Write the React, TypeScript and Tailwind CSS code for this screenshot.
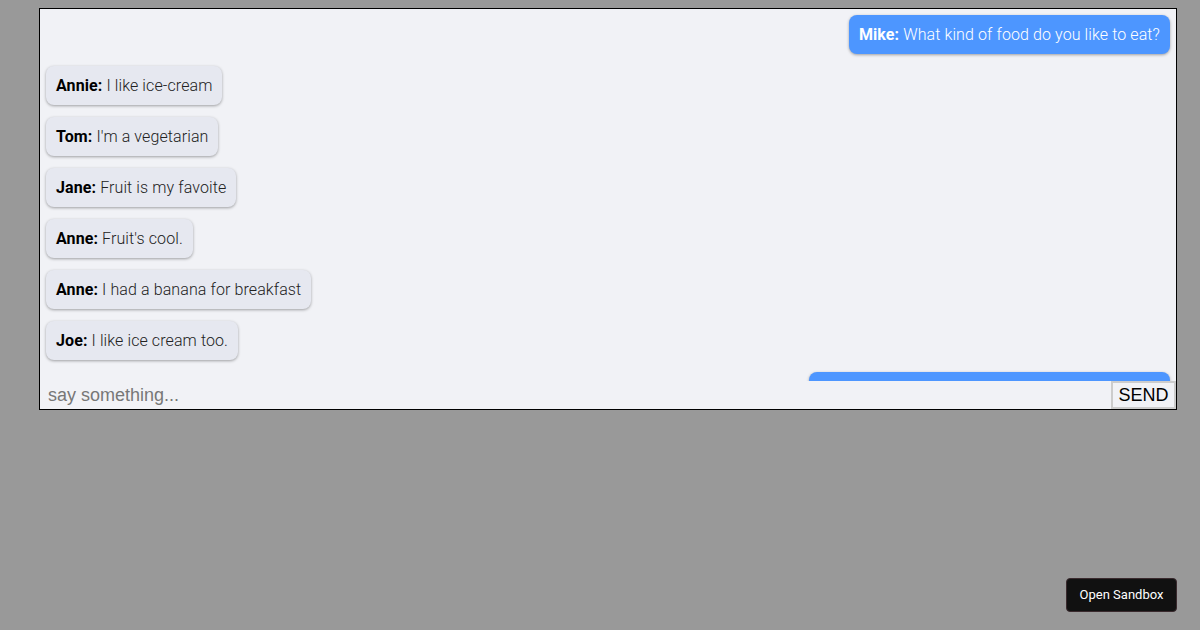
import React, { useState } from 'react';

type Message = {
  name: string;
  text: string;
  mine?: boolean;
};

const messages: Message[] = [
  { name: 'Mike', text: 'What kind of food do you like to eat?', mine: true },
  { name: 'Annie', text: 'I like ice-cream' },
  { name: 'Tom', text: "I'm a vegetarian" },
  { name: 'Jane', text: 'Fruit is my favoite' },
  { name: 'Anne', text: "Fruit's cool." },
  { name: 'Anne', text: 'I had a banana for breakfast' },
  { name: 'Joe', text: 'I like ice cream too.' },
  { name: 'Mike', text: 'Sounds good, I like ice cream and fruit too', mine: true },
];

const Bubble = ({ msg }: { msg: Message }) => (
  <div className={msg.mine ? 'flex justify-end' : 'flex justify-start'}>
    <div
      className={
        msg.mine
          ? 'rounded-[8px] bg-[#4d96ff] px-[10px] py-[10px] text-[16px] leading-[19px] font-light tracking-[0.1px] text-white shadow-[0_1px_3px_rgba(0,0,0,0.35)]'
          : 'rounded-[8px] bg-[#e6e8f0] px-[10px] py-[10px] text-[16px] leading-[19px] font-light tracking-[0.1px] text-[#222] shadow-[0_1px_3px_rgba(0,0,0,0.35)]'
      }
    >
      <span className={msg.mine ? 'font-bold text-white' : 'font-bold text-black'}>{msg.name}:</span>{' '}
      {msg.text}
    </div>
  </div>
);

export default function App() {
  const [draft, setDraft] = useState('');

  return (
    <div className="relative h-[630px] w-full overflow-hidden bg-[#999999] pt-2 font-['Roboto',sans-serif]">
      <div className="ml-[39px] flex h-[402px] w-[1138px] flex-col border border-black bg-[#f1f2f6]">
        {/* message list, scrolled to the top so the last one hides under the input */}
        <div className="flex h-[372px] flex-col gap-[12px] overflow-hidden px-[6px] pt-[6px]">
          {messages.map((m, i) => (
            <Bubble key={i} msg={m} />
          ))}
        </div>
        <div className="flex h-[28px]">
          <input
            value={draft}
            onChange={(e) => setDraft(e.target.value)}
            placeholder="say something..."
            className="min-w-0 flex-1 bg-transparent pl-[8px] font-['Liberation_Sans',Arial,sans-serif] text-[18px] text-black outline-none placeholder:text-[#777]"
          />
          <button className="w-[65px] border-2 border-[#cccccc] bg-[#f1f2f6] font-['Liberation_Sans',Arial,sans-serif] text-[18px] leading-none text-black">
            SEND
          </button>
        </div>
      </div>

      <button className="absolute right-[23px] bottom-[18px] h-[34px] w-[111px] rounded-[4px] border border-[#3a2a2e] bg-[#111111] text-[13px] text-white">
        Open Sandbox
      </button>
    </div>
  );
}
